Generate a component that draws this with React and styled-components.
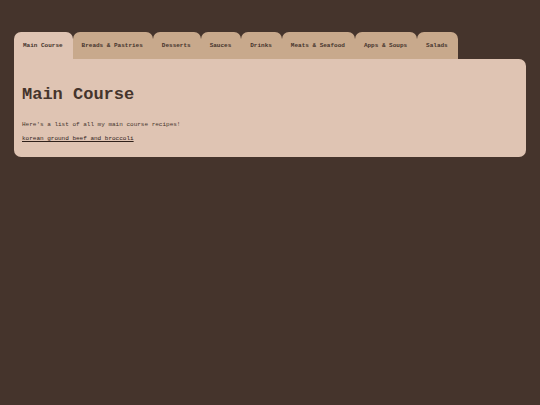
import React, { useState } from "react";
import styled, { createGlobalStyle } from "styled-components";

const GlobalStyle = createGlobalStyle`
  body {
    margin: 0;
    background: #45342c;
    color: #45342c;
    font-family: "Liberation Mono", monospace;
    font-size: 6px;
    line-height: 8px;
  }
`;

const Page = styled.main`
  padding: 32px 14px;
`;

const TabBar = styled.div`
  display: flex;
`;

const Tab = styled.button`
  padding: 10px 10px 9px 9px;
  border: 0;
  border-radius: 7px 7px 0 0;
  background: ${(p) => (p.$active ? "#dfc4b3" : "#c8a98c")};
  color: inherit;
  font: inherit;
  font-weight: 700;
  white-space: nowrap;
  cursor: pointer;
`;

const Panel = styled.section`
  padding: 24px 8px 14px;
  border-radius: 0 7px 7px 7px;
  background: #dfc4b3;
`;

const Title = styled.h1`
  margin: 0 0 14px;
  font-size: 17px;
  line-height: 24px;
`;

const Intro = styled.p`
  margin: 0 0 6px;
`;

const RecipeLink = styled.a`
  display: block;
  width: fit-content;
  color: #2f211b;
`;

const categories = [
  "Main Course",
  "Breads & Pastries",
  "Desserts",
  "Sauces",
  "Drinks",
  "Meats & Seafood",
  "Apps & Soups",
  "Salads",
];

const recipes = { "Main Course": ["korean ground beef and broccoli"] };

export default function App() {
  const [active, setActive] = useState(categories[0]);
  return (
    <Page>
      <GlobalStyle />
      <TabBar role="tablist" aria-label="Recipe categories">
        {categories.map((name, i) => (
          <Tab
            key={name}
            id={`tab-${i}`}
            type="button"
            role="tab"
            aria-selected={name === active}
            aria-controls="recipes"
            $active={name === active}
            onClick={() => setActive(name)}
          >
            {name}
          </Tab>
        ))}
      </TabBar>
      <Panel
        id="recipes"
        role="tabpanel"
        aria-labelledby={`tab-${categories.indexOf(active)}`}
      >
        <Title>{active}</Title>
        <Intro>Here's a list of all my {active.toLowerCase()} recipes!</Intro>
        {(recipes[active] || []).map((recipe) => (
          <RecipeLink key={recipe} href="#recipe">
            {recipe}
          </RecipeLink>
        ))}
      </Panel>
    </Page>
  );
}
